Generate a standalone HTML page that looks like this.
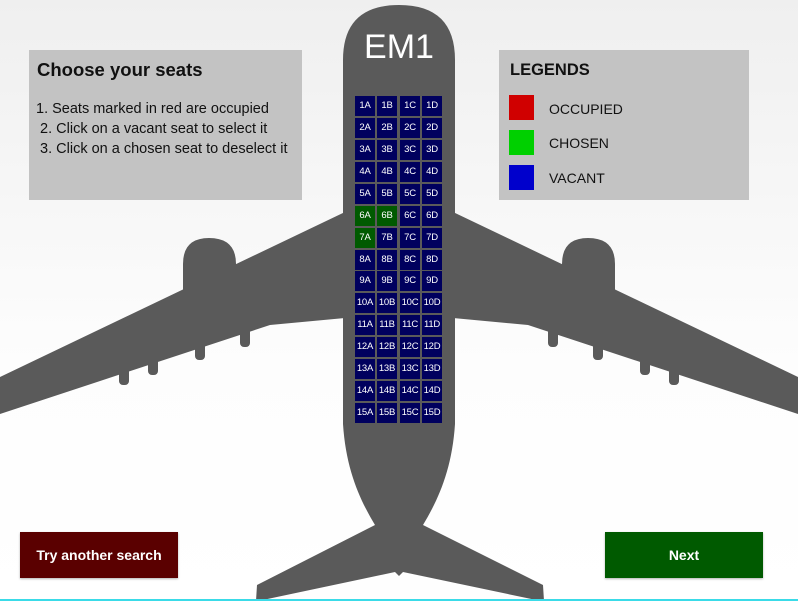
<!DOCTYPE html>
<html><head><meta charset="utf-8"><style>
body{margin:0;width:798px;height:601px;overflow:hidden;font-family:"Liberation Sans",sans-serif;background:linear-gradient(#efefef,#fdfdfd 60%,#fff);position:relative}
svg{position:absolute;left:0;top:0}
.panel{position:absolute;background:#c3c3c3;}
.seat{position:absolute;width:20px;height:20px;background:#00005e;color:#fff;font-size:9.5px;line-height:20px;text-align:center;letter-spacing:-0.2px}
.g{background:#005a00}
.btn{position:absolute;top:532px;height:46px;width:158px;color:#fff;font-weight:bold;font-size:14px;line-height:47px;text-align:center;box-shadow:0 1px 2px rgba(0,0,0,.3)}
.lg{position:absolute;left:10px;width:25px;height:25px}
.lt{position:absolute;left:50px;font-size:14px;color:#111}
</style></head><body>
<svg width="798" height="601" viewBox="0 0 798 601">
<g fill="#5a5a5a">
<path d="M343 60 Q343 5 399 5 Q455 5 455 60 L455 424 C452 470 438 500 423 525 L543 585 L544 601 L256 601 L257 585 L375 525 C360 500 346 470 343 424 Z"/>
<path d="M345 212 L0 377 L0 414 L270 325 L345 318 Z"/>
<path d="M453 212 L798 377 L798 414 L528 325 L453 318 Z"/>
<path d="M183 300 L183 264 Q183 238 209 238 Q236 238 236 264 L236 300 Z"/>
<path d="M562 300 L562 264 Q562 238 588 238 Q615 238 615 264 L615 300 Z"/>
<rect x="119" y="365" width="10" height="20" rx="4"/>
<rect x="148" y="355" width="10" height="20" rx="4"/>
<rect x="195" y="340" width="10" height="20" rx="4"/>
<rect x="240" y="325" width="10" height="22" rx="4"/>
<rect x="669" y="365" width="10" height="20" rx="4"/>
<rect x="640" y="355" width="10" height="20" rx="4"/>
<rect x="593" y="340" width="10" height="20" rx="4"/>
<rect x="548" y="325" width="10" height="22" rx="4"/>
</g>
<path d="M258 601 L395 572 L399 576 L403 572 L541 601 Z" fill="#fefefe"/>
<rect x="0" y="599" width="798" height="2" fill="#3adbe8"/>
</svg>
<div style="position:absolute;left:343px;top:28px;width:112px;text-align:center;color:#fff;font-size:34px">EM1</div>
<div class="panel" style="left:29px;top:50px;width:273px;height:150px">
<div style="position:absolute;left:8px;top:9px;font-weight:bold;font-size:18.5px;color:#111">Choose your seats</div>
<div style="position:absolute;left:7px;top:49px;font-size:14.5px;line-height:20px;color:#111">1. Seats marked in red are occupied<br>&nbsp;2. Click on a vacant seat to select it<br>&nbsp;3. Click on a chosen seat to deselect it</div>
</div>
<div class="panel" style="left:499px;top:50px;width:250px;height:150px">
<div style="position:absolute;left:11px;top:11px;font-weight:bold;font-size:16.5px;color:#111">LEGENDS</div>
<div class="lg" style="top:45px;background:#d00000"></div><div class="lt" style="top:51px">OCCUPIED</div>
<div class="lg" style="top:80px;background:#00d000"></div><div class="lt" style="top:85px">CHOSEN</div>
<div class="lg" style="top:115px;background:#0000cc"></div><div class="lt" style="top:120px">VACANT</div>
</div>
<div class="btn" style="left:20px;background:#5a0000">Try another search</div>
<div class="btn" style="left:605px;background:#005a00">Next</div>
<div style="position:absolute;left:0;top:0">
<script>
var xs=[355,377,400,422],L="ABCD",h="";
for(var r=1;r<=15;r++)for(var c=0;c<4;c++){var g=(r==6&&c<2)||(r==7&&c==0);h+='<div class="seat'+(g?' g':'')+'" style="left:'+xs[c]+'px;top:'+(96+(r-1)*21.93)+'px">'+r+L[c]+'</div>';}
document.write(h);
</script>
</div>
</body></html>
